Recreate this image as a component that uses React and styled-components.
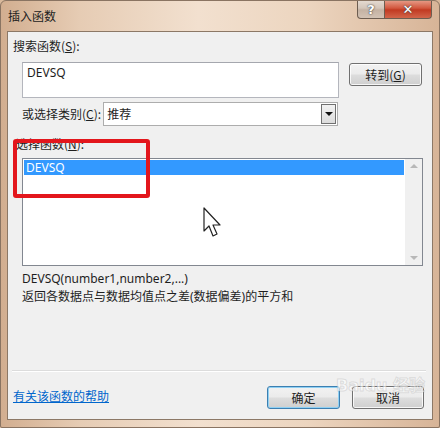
import React from 'react';
import styled, { createGlobalStyle } from 'styled-components';

const GlobalStyle = createGlobalStyle`
  html, body {
    margin: 0;
    padding: 0;
    background: #d9b99c;
  }
  body {
    font-family: "Noto Sans", "Noto Sans CJK SC", sans-serif;
    font-size: 12px;
    color: #1e1e1e;
  }
`;

const Window = styled.div`
  width: 440px;
  height: 428px;
  box-sizing: border-box;
  display: flex;
  flex-direction: column;
  background: linear-gradient(to right, #d2ae90 0%, #e6ccb4 18%, #f2e0cf 45%, #ecd5bf 70%, #d7b497 100%);
  border: 1px solid #8a7462;
  border-radius: 6px 6px 2px 2px;
  overflow: hidden;
`;

const TitleBar = styled.div`
  height: 30px;
  flex-shrink: 0;
  display: flex;
  justify-content: space-between;
  align-items: flex-start;
  padding: 0 7px 0 7px;
`;

const Title = styled.div`
  font-family: "Noto Sans CJK SC", sans-serif;
  font-size: 12px;
  line-height: 30px;
  color: #222;
`;

const Caption = styled.div`
  display: flex;
  margin-top: -1px;
`;

const CaptionButton = styled.div`
  height: 19px;
  width: ${({ $w }) => $w}px;
  box-sizing: border-box;
  display: flex;
  align-items: center;
  justify-content: center;
  border: 1px solid #6d5d50;
  border-top: none;
  font-family: "DejaVu Sans", sans-serif;
  font-weight: bold;
  font-size: ${({ $fs }) => $fs}px;
  color: #fff;
  text-shadow: 0 0 1px #333, 0 0 2px #555;
  background: ${({ $close }) =>
    $close
      ? 'linear-gradient(to bottom, #e8a08c 0%, #d2583f 45%, #c13a22 55%, #d2654a 100%)'
      : 'linear-gradient(to bottom, #e6dcd3 0%, #d4c6ba 45%, #c4b2a3 55%, #d2c2b4 100%)'};
  border-radius: ${({ $close }) => ($close ? '0 0 4px 0' : '0 0 0 4px')};
  ${({ $close }) => ($close ? 'border-left: none;' : '')}
`;

const Client = styled.div`
  position: relative;
  flex: 1;
  margin: 0 6px 7px 6px;
  background: #f0f0f0;
  border: 1px solid #8c7866;
  display: flex;
  flex-direction: column;
`;

const Label = styled.div`
  font-family: "Noto Sans CJK SC", sans-serif;
  font-size: 12px;
  line-height: 14px;
  margin: ${({ $m }) => $m};
  white-space: nowrap;
  u {
    text-decoration: underline;
  }
`;

const Row = styled.div`
  display: flex;
  align-items: ${({ $align }) => $align || 'flex-start'};
  margin: ${({ $m }) => $m};
`;

const TextBox = styled.div`
  width: 317px;
  height: 36px;
  box-sizing: border-box;
  background: #fff;
  border: 1px solid #b4b6bd;
  border-top-color: #a5a7ae;
  padding: 2px 4px;
  font-family: "Noto Sans", sans-serif;
  font-size: 12px;
  line-height: 16px;
`;

const Button = styled.div`
  width: ${({ $w }) => $w || 73}px;
  height: 23px;
  box-sizing: border-box;
  border: 1px solid ${({ $focus }) => ($focus ? '#3c7fb1' : '#707070')};
  border-radius: 3px;
  background: linear-gradient(to bottom, #f2f2f2 0%, #ebebeb 48%, #dddddd 52%, #cfcfcf 100%);
  box-shadow: inset 0 0 0 1px ${({ $focus }) => ($focus ? '#8fd0f3' : 'rgba(255,255,255,0.8)')};
  display: flex;
  align-items: center;
  justify-content: center;
  font-family: "Noto Sans CJK SC", sans-serif;
  font-size: 12px;
  margin: ${({ $m }) => $m || '0'};
  u {
    text-decoration: underline;
  }
`;

const Select = styled.div`
  width: 235px;
  height: 24px;
  box-sizing: border-box;
  background: #fff;
  border: 1px solid #adadad;
  display: flex;
  align-items: stretch;
  margin-left: 2px;
`;

const SelectText = styled.div`
  flex: 1;
  padding-left: 3px;
  line-height: 21px;
  font-family: "Noto Sans CJK SC", sans-serif;
  font-size: 12px;
`;

const DropButton = styled.div`
  width: 15px;
  margin: 1px;
  box-sizing: border-box;
  border: 1px solid #707070;
  background: linear-gradient(to bottom, #f2f2f2, #dcdcdc);
  display: flex;
  align-items: center;
  justify-content: center;
  &::after {
    content: '';
    border-left: 4px solid transparent;
    border-right: 4px solid transparent;
    border-top: 4px solid #111;
  }
`;

const List = styled.div`
  width: 401px;
  height: 108px;
  box-sizing: border-box;
  background: #fff;
  border: 1px solid #828790;
  display: flex;
  margin: 7px 0 0 14px;
`;

const ListItems = styled.div`
  flex: 1;
  padding: 1px 1px;
`;

const ListItem = styled.div`
  height: 15px;
  line-height: 15px;
  padding-left: 2px;
  font-family: "Noto Sans", sans-serif;
  font-size: 12px;
  background: ${({ $selected }) => ($selected ? '#3399ff' : 'transparent')};
  color: ${({ $selected }) => ($selected ? '#fff' : '#1e1e1e')};
`;

const ScrollBar = styled.div`
  width: 17px;
  background: #f0f0f0;
  display: flex;
  flex-direction: column;
  justify-content: space-between;
  align-items: center;
  padding: 5px 0;
`;

const Arrow = styled.div`
  width: 0;
  height: 0;
  border-left: 4px solid transparent;
  border-right: 4px solid transparent;
  ${({ $up }) => ($up ? 'border-bottom: 4px solid #b8b8b8;' : 'border-top: 4px solid #b8b8b8;')}
`;

const Text = styled.div`
  font-family: "Noto Sans", "Noto Sans CJK SC", sans-serif;
  font-size: 12px;
  line-height: 18px;
  margin: ${({ $m }) => $m || '0'};
  white-space: nowrap;
`;

const Separator = styled.div`
  height: 1px;
  background: #dcdcdc;
  border-bottom: 1px solid #fff;
  margin: auto 6px 0 4px;
`;

const Footer = styled.div`
  display: flex;
  align-items: center;
  margin: 14px 0 10px 5px;
  height: 23px;
`;

const HelpLink = styled.a`
  font-family: "Noto Sans CJK SC", sans-serif;
  font-size: 12px;
  color: #0066cc;
  text-decoration: underline;
  margin-right: auto;
  margin-top: -4px;
`;

const Highlight = styled.div`
  position: absolute;
  left: 5px;
  top: 107px;
  width: 137px;
  height: 59px;
  box-sizing: border-box;
  border: 4px solid #e3161c;
  border-radius: 3px;
`;

const Cursor = styled.svg`
  position: absolute;
  left: 195px;
  top: 175px;
`;

const Watermark = styled.div`
  position: absolute;
  left: 328px;
  top: 340px;
  white-space: nowrap;
  font-family: "DejaVu Sans", "Noto Sans CJK SC", sans-serif;
  font-weight: bold;
  font-size: 16px;
  color: rgba(255, 255, 255, 0.6);
  -webkit-text-stroke: 1px rgba(160, 160, 160, 0.3);
  pointer-events: none;
`;

export default function App() {
  return (
    <>
      <GlobalStyle />
      <Window>
        <TitleBar>
          <Title>插入函数</Title>
          <Caption>
            <CaptionButton $w={28} $fs={13}>?</CaptionButton>
            <CaptionButton $w={47} $fs={13} $close>✕</CaptionButton>
          </Caption>
        </TitleBar>
        <Client>
          <Label $m="7px 0 0 5px">搜索函数(<u>S</u>):</Label>
          <Row $m="9px 0 0 14px">
            <TextBox>DEVSQ</TextBox>
            <Button $w={73} $m="1px 0 0 10px">转到(<u>G</u>)</Button>
          </Row>
          <Row $m="4px 0 0 14px" $align="center">
            <Label $m="0">或选择类别(<u>C</u>):</Label>
            <Select>
              <SelectText>推荐</SelectText>
              <DropButton />
            </Select>
          </Row>
          <Label $m="11px 0 0 8px">选择函数(<u>N</u>):</Label>
          <List>
            <ListItems>
              <ListItem $selected>DEVSQ</ListItem>
            </ListItems>
            <ScrollBar>
              <Arrow $up />
              <Arrow />
            </ScrollBar>
          </List>
          <Text $m="4px 0 0 14px">DEVSQ(number1,number2,...)</Text>
          <Text $m="0 0 0 14px">返回各数据点与数据均值点之差(数据偏差)的平方和</Text>
          <Separator />
          <Footer>
            <HelpLink href="#">有关该函数的帮助</HelpLink>
            <Button $w={73} $focus>确定</Button>
            <Button $w={72} $m="0 8px 0 12px">取消</Button>
          </Footer>
          <Highlight />
          <Cursor width="20" height="32" viewBox="0 0 20 32">
            <path d="M1 1 L1 24 L6 19 L10 29 L14 27 L10 18 L17 18 Z" fill="#fff" stroke="#222" strokeWidth="1.2" strokeLinejoin="round" />
          </Cursor>
          <Watermark>Baidu 经验</Watermark>
        </Client>
      </Window>
    </>
  );
}
